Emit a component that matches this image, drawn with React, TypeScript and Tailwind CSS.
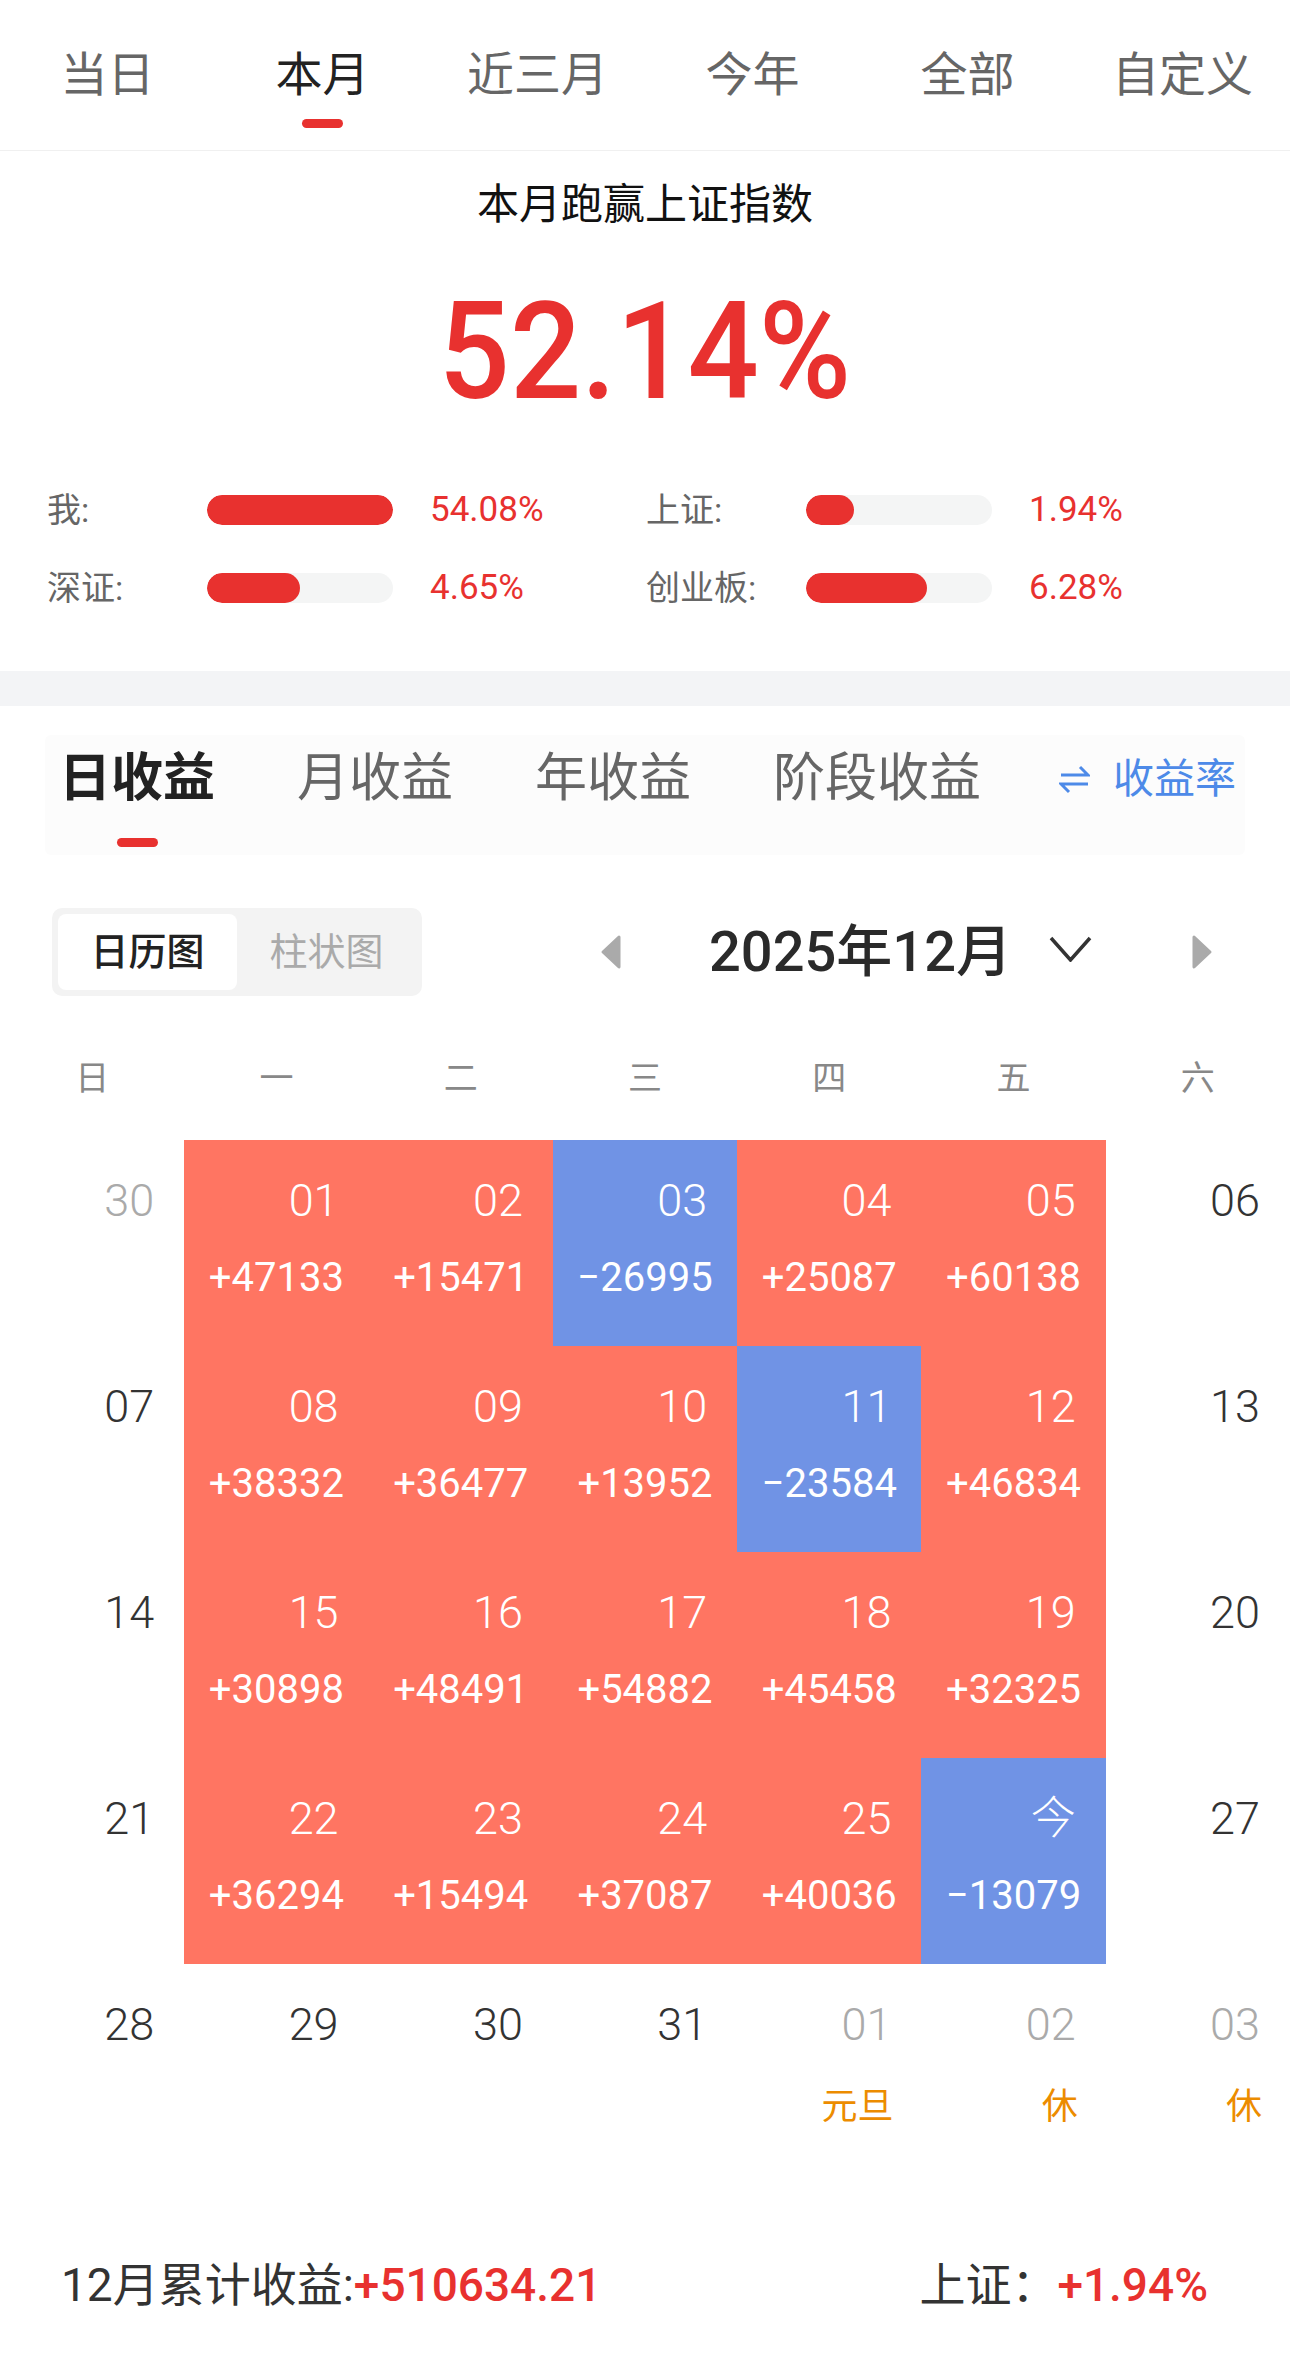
import React from "react"

type Cell = {
  day: string
  value?: string
  tone?: "up" | "down"
  muted?: boolean
  note?: string
}

const topTabs = ["当日", "本月", "近三月", "今年", "全部", "自定义"]
const subTabs = ["日收益", "月收益", "年收益", "阶段收益"]
const weekdays = ["日", "一", "二", "三", "四", "五", "六"]

const stats = [
  { label: "我:", pct: 100, value: "54.08%" },
  { label: "上证:", pct: 26, value: "1.94%" },
  { label: "深证:", pct: 50, value: "4.65%" },
  { label: "创业板:", pct: 65, value: "6.28%" },
]

const cells: Cell[] = [
  { day: "30", muted: true },
  { day: "01", value: "+47133", tone: "up" },
  { day: "02", value: "+15471", tone: "up" },
  { day: "03", value: "−26995", tone: "down" },
  { day: "04", value: "+25087", tone: "up" },
  { day: "05", value: "+60138", tone: "up" },
  { day: "06" },
  { day: "07" },
  { day: "08", value: "+38332", tone: "up" },
  { day: "09", value: "+36477", tone: "up" },
  { day: "10", value: "+13952", tone: "up" },
  { day: "11", value: "−23584", tone: "down" },
  { day: "12", value: "+46834", tone: "up" },
  { day: "13" },
  { day: "14" },
  { day: "15", value: "+30898", tone: "up" },
  { day: "16", value: "+48491", tone: "up" },
  { day: "17", value: "+54882", tone: "up" },
  { day: "18", value: "+45458", tone: "up" },
  { day: "19", value: "+32325", tone: "up" },
  { day: "20" },
  { day: "21" },
  { day: "22", value: "+36294", tone: "up" },
  { day: "23", value: "+15494", tone: "up" },
  { day: "24", value: "+37087", tone: "up" },
  { day: "25", value: "+40036", tone: "up" },
  { day: "今", value: "−13079", tone: "down" },
  { day: "27" },
  { day: "28" },
  { day: "29" },
  { day: "30" },
  { day: "31" },
  { day: "01", muted: true, note: "元旦" },
  { day: "02", muted: true, note: "休" },
  { day: "03", muted: true, note: "休" },
]

function Triangle({ dir }: { dir: "left" | "right" }) {
  return (
    <svg width="22" height="36" viewBox="0 0 22 36" className="shrink-0">
      <path
        d={dir === "left" ? "M19 3 L3 18 L19 33 Z" : "M3 3 L19 18 L3 33 Z"}
        fill="#aaaaaa"
        stroke="#aaaaaa"
        strokeWidth="3"
        strokeLinejoin="round"
      />
    </svg>
  )
}

function DayCell({ cell }: { cell: Cell }) {
  const bg =
    cell.tone === "up" ? "bg-[#ff7562]" : cell.tone === "down" ? "bg-[#7093e5]" : "bg-white"
  const dayColor = cell.tone ? "text-white" : cell.muted ? "text-[#aaaaaa]" : "text-[#333333]"
  return (
    <div className={`h-[206px] flex flex-col ${bg}`}>
      <div className={`pt-[39px] pr-[30px] text-right text-[45px] leading-[44px] font-light ${dayColor}`}>
        {cell.day}
      </div>
      {cell.value && (
        <div className="mt-[35px] text-center text-[40px] leading-[40px] text-white">{cell.value}</div>
      )}
      {cell.note && (
        <div className="mt-[42px] pr-[28px] text-right text-[36px] leading-[36px] text-[#ec8c00]">
          {cell.note}
        </div>
      )}
    </div>
  )
}

export default function App() {
  return (
    <div className="w-[1290px] bg-white font-[Roboto,'Noto_Sans_CJK_SC',sans-serif] text-[#333333]">
      {/* Period tabs */}
      <div className="grid grid-cols-6 h-[151px] border-b border-[#f0f0f0]">
        {topTabs.map((t, i) => (
          <div key={t} className="flex flex-col items-center pt-[52px]">
            <span className={`text-[47px] leading-[46px] ${i === 1 ? "text-[#222222]" : "text-[#666666]"}`}>
              {t}
            </span>
            <span className={`mt-[21px] h-[9px] w-[41px] rounded-full ${i === 1 ? "bg-[#e8312f]" : "bg-transparent"}`} />
          </div>
        ))}
      </div>

      {/* Summary */}
      <div className="flex flex-col items-center pt-[33px]">
        <div className="text-[42px] leading-[42px] text-[#111111]">本月跑赢上证指数</div>
        <div className="mt-[59px] text-[135px] leading-none font-medium text-[#e8312f] scale-x-[0.93]">52.14%</div>
      </div>
      <div className="grid grid-cols-2 gap-y-[28px] pl-[47px] pr-[45px] pt-[65px] pb-[58px]">
        {stats.map((s) => (
          <div key={s.label} className="flex items-center h-[50px]">
            <span className="w-[160px] text-[34px] leading-[34px] text-[#666666]">{s.label}</span>
            <div className="w-[186px] h-[30px] rounded-full bg-[#f4f5f5] overflow-hidden">
              <div className="h-full rounded-full bg-[#e8312f]" style={{ width: `${s.pct}%` }} />
            </div>
            <span className="ml-[37px] text-[35px] leading-[34px] text-[#e8312f]">{s.value}</span>
          </div>
        ))}
      </div>

      <div className="h-[35px] bg-[#f3f4f6]" />

      {/* Profit type tabs */}
      <div className="mx-[45px] mt-[29px] h-[120px] bg-[#fcfcfc] rounded-[6px] flex items-start gap-[82px] pl-[14px] pt-[18px] whitespace-nowrap">
        {subTabs.map((t, i) => (
          <div key={t} className="flex flex-col items-center shrink-0">
            <span
              className={`text-[52px] leading-[52px] ${i === 0 ? "font-bold text-[#222222]" : "text-[#666666]"}`}
            >
              {t}
            </span>
            <span className={`mt-[33px] h-[9px] w-[41px] rounded-full ${i === 0 ? "bg-[#e8312f]" : "bg-transparent"}`} />
          </div>
        ))}
        <div className="flex items-center gap-[23px] h-[52px] -ml-[4px] shrink-0 text-[#4d8ae8]">
          <svg width="31" height="30" viewBox="0 0 31 30" fill="none" stroke="#4d8ae8" strokeWidth="3">
            <path d="M2 11 H29 L21 3" />
            <path d="M29 20 H2 L10 28" />
          </svg>
          <span className="text-[41px] leading-[41px]">收益率</span>
        </div>
      </div>

      {/* View switch + month */}
      <div className="flex items-center mt-[53px] pl-[52px]">
        <div className="flex p-[6px] rounded-[10px] bg-[#f3f3f3]">
          <div className="w-[179px] h-[76px] rounded-[8px] bg-white flex items-center justify-center text-[38px] font-medium text-[#222222]">
            日历图
          </div>
          <div className="w-[179px] h-[76px] flex items-center justify-center text-[38px] text-[#aaaaaa]">
            柱状图
          </div>
        </div>
        <div className="ml-[178px]">
          <Triangle dir="left" />
        </div>
        <div className="ml-[87px] w-[302px] whitespace-nowrap text-[56px] leading-[56px] font-medium text-[#2a2a2a]">
          2025年12月
        </div>
        <svg width="43" height="26" viewBox="0 0 43 26" fill="none" className="ml-[38px] -mt-[6px]">
          <path d="M2 2 L21.5 24 L41 2" stroke="#333333" strokeWidth="3.5" />
        </svg>
        <div className="ml-[99px]">
          <Triangle dir="right" />
        </div>
      </div>

      {/* Weekdays */}
      <div className="grid grid-cols-7 mt-[65px]">
        {weekdays.map((w) => (
          <div key={w} className="text-center text-[34px] leading-[34px] text-[#888888]">
            {w}
          </div>
        ))}
      </div>

      {/* Calendar */}
      <div className="grid grid-cols-7 mt-[45px]">
        {cells.map((c, i) => (
          <DayCell key={i} cell={c} />
        ))}
      </div>

      {/* Footer */}
      <div className="flex items-center justify-between pl-[61px] pr-[82px] mt-[92px] pb-[46px] text-[46px] leading-[46px]">
        <div className="whitespace-nowrap">
          <span className="text-[#333333]">12月累计收益:</span>
          <span className="font-medium text-[#e8312f]">+510634.21</span>
        </div>
        <div className="whitespace-nowrap">
          <span className="text-[#333333]">上证：</span>
          <span className="font-medium text-[#e8312f]">+1.94%</span>
        </div>
      </div>
    </div>
  )
}
